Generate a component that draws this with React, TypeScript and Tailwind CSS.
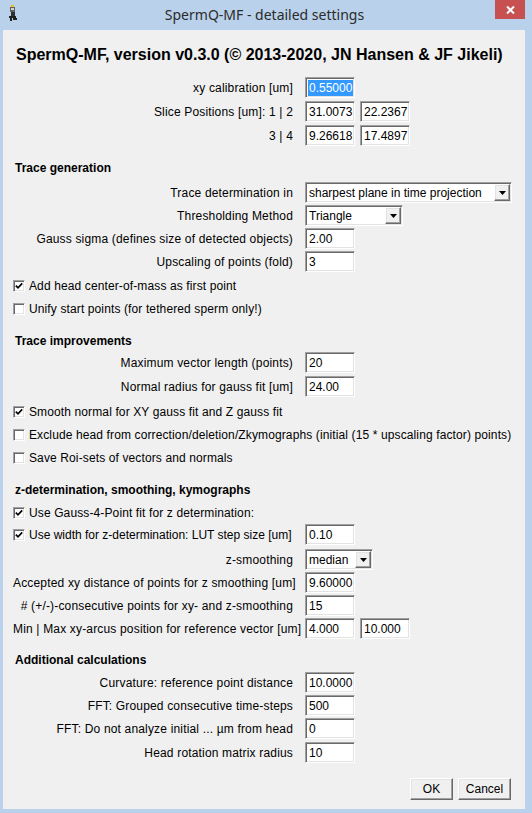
import type React from 'react'

const sunken = 'border border-t-[#a0a0a0] border-l-[#a0a0a0] border-r-white border-b-white shadow-[inset_1px_1px_0_#696969,inset_-1px_-1px_0_#e3e3e3]'
const raised = 'border border-t-white border-l-white border-r-[#696969] border-b-[#696969] shadow-[inset_-1px_-1px_0_#a0a0a0,inset_1px_1px_0_#e3e3e3]'

const Field = ({ value, w = 'w-[50px]', selected }: { value: string; w?: string; selected?: boolean }) => (
    <div className={`${w} h-[21px] bg-white ${sunken} flex items-center overflow-hidden whitespace-nowrap pl-[2px] text-[12px] text-black`}>
        {selected ? <span className="bg-[#3399ff] px-[1px] leading-[16px] text-white">{value}</span> : <span className="pl-[1px]">{value}</span>}
    </div>
)

const Select = ({ value, w }: { value: string; w: string }) => (
    <div className={`${w} h-[21px] bg-white ${sunken} flex items-center pl-[3px] pr-[1px] text-[12px] text-black`}>
        <span className="flex-1 whitespace-nowrap">{value}</span>
        <div className={`flex h-[17px] w-[16px] items-center justify-center bg-[#f0f0f0] ${raised}`}>
            <svg width="7" height="4" viewBox="0 0 7 4">
                <path d="M0 0 H7 L3.5 4 Z" fill="#000" />
            </svg>
        </div>
    </div>
)

const Check = ({ checked }: { checked?: boolean }) => (
    <div className={`flex h-[12px] w-[12px] shrink-0 items-center justify-center bg-white ${sunken}`}>
        {checked && (
            <svg width="8" height="8" viewBox="0 0 8 8">
                <path d="M0.8 3.6 L3 5.8 L7.2 1.4" fill="none" stroke="#000" strokeWidth="1.7" />
            </svg>
        )}
    </div>
)

const Row = ({ label, mt, children }: { label: React.ReactNode; mt: string; children: React.ReactNode }) => (
    <div className={`flex items-center ${mt}`}>
        <div className="w-[280px] whitespace-nowrap text-right tracking-[0.17px]">{label}</div>
        <div className="ml-[12px] flex gap-[5px]">{children}</div>
    </div>
)

const CheckRow = ({ label, checked, mt }: { label: string; checked?: boolean; mt: string }) => (
    <div className={`flex h-[14px] items-center gap-[4px] ${mt}`}>
        <Check checked={checked} />
        <span className="whitespace-nowrap leading-[14px] tracking-[0.12px]">{label}</span>
    </div>
)

const Section = ({ title, mt }: { title: string; mt: string }) => (
    <div className={`pl-[2px] text-[12px] leading-[14px] font-bold ${mt}`}>{title}</div>
)

const Button = ({ label, w }: { label: string; w: string }) => (
    <div className={`${w} flex h-[22px] items-center justify-center bg-[#f0f0f0] text-[12px] ${raised}`}>{label}</div>
)

export default function App() {
    return (
        <div className="flex h-[813px] w-[532px] flex-col bg-[#b9d1ea] font-['Liberation_Sans',Arial,sans-serif] text-black">
            <div className="grid h-[30px] shrink-0 grid-cols-[1fr_auto_1fr]">
                <div className="flex items-start pt-[5px] pl-[8px]">
                    <svg width="10" height="17" viewBox="0 0 10 17">
                        <rect x="3" y="0" width="3" height="2" fill="#e8c020" />
                        <rect x="2" y="2" width="5" height="5" fill="#606060" />
                        <rect x="3" y="3" width="3" height="2" fill="#d0d0d0" />
                        <rect x="3" y="7" width="4" height="4" fill="#303030" />
                        <rect x="1" y="11" width="7" height="2" fill="#202020" />
                        <rect x="2" y="13" width="2" height="3" fill="#202020" />
                        <rect x="5" y="13" width="4" height="2" fill="#202020" />
                    </svg>
                </div>
                <div className="pt-[4px] pr-[3px] font-['Noto_Sans',sans-serif] text-[14px] leading-[21px] text-[#2b2b2b]">SpermQ-MF - detailed settings</div>
                <div className="flex justify-end pr-[7px]">
                    <div className="flex h-[19px] w-[30px] items-center justify-center bg-[#c75050]">
                        <svg width="9" height="8" viewBox="0 0 9 8">
                            <path d="M1 0.5 L8 7.5 M8 0.5 L1 7.5" stroke="#fff" strokeWidth="2" />
                        </svg>
                    </div>
                </div>
            </div>

            <div className="mr-[7px] mb-[4px] ml-[3px] flex-1 bg-[#f0f0f0] pl-[10px] text-[12px]">
                <div className="mt-[15px] pl-[3px] text-[16px] leading-[19px] font-bold">SpermQ-MF, version v0.3.0 (© 2013-2020, JN Hansen &amp; JF Jikeli)</div>

                <Row label="xy calibration [um]" mt="mt-[13px]">
                    <Field value="0.55000" selected />
                </Row>
                <Row label="Slice Positions [um]: 1 | 2" mt="mt-[3px]">
                    <Field value="31.0073" />
                    <Field value="22.2367" />
                </Row>
                <Row label="3 | 4" mt="mt-[3px]">
                    <Field value="9.26618" />
                    <Field value="17.4897" />
                </Row>

                <Section title="Trace generation" mt="mt-[15px]" />
                <Row label="Trace determination in" mt="mt-[7px]">
                    <Select value="sharpest plane in time projection" w="w-[207px]" />
                </Row>
                <Row label="Thresholding Method" mt="mt-[2px]">
                    <Select value="Triangle" w="w-[98px]" />
                </Row>
                <Row label="Gauss sigma (defines size of detected objects)" mt="mt-[2px]">
                    <Field value="2.00" />
                </Row>
                <Row label="Upscaling of points (fold)" mt="mt-[2px]">
                    <Field value="3" />
                </Row>
                <CheckRow label="Add head center-of-mass as first point" checked mt="mt-[7px]" />
                <CheckRow label="Unify start points (for tethered sperm only!)" mt="mt-[9px]" />

                <Section title="Trace improvements" mt="mt-[18px]" />
                <Row label="Maximum vector length (points)" mt="mt-[4px]">
                    <Field value="20" />
                </Row>
                <Row label="Normal radius for gauss fit [um]" mt="mt-[3px]">
                    <Field value="24.00" />
                </Row>
                <CheckRow label="Smooth normal for XY gauss fit and Z gauss fit" checked mt="mt-[8px]" />
                <CheckRow label="Exclude head from correction/deletion/Zkymographs (initial (15 * upscaling factor) points)" mt="mt-[9px]" />
                <CheckRow label="Save Roi-sets of vectors and normals" mt="mt-[9px]" />

                <Section title="z-determination, smoothing, kymographs" mt="mt-[18px]" />
                <CheckRow label="Use Gauss-4-Point fit for z determination:" checked mt="mt-[9px]" />
                <div className="mt-[4px] flex items-center">
                    <div className="flex w-[280px] items-center gap-[4px] whitespace-nowrap">
                        <Check checked />
                        <span>Use width for z-determination: LUT step size [um]</span>
                    </div>
                    <div className="ml-[12px]">
                        <Field value="0.10" />
                    </div>
                </div>
                <Row label="z-smoothing" mt="mt-[4px]">
                    <Select value="median" w="w-[68px]" />
                </Row>
                <Row label="Accepted xy distance of points for z smoothing [um]" mt="mt-[2px]">
                    <Field value="9.60000" />
                </Row>
                <Row label="# (+/-)-consecutive points for xy- and z-smoothing" mt="mt-[2px]">
                    <Field value="15" />
                </Row>
                <Row label="Min | Max xy-arcus position for reference vector [um]" mt="mt-[2px]">
                    <Field value="4.000" />
                    <Field value="10.000" />
                </Row>

                <Section title="Additional calculations" mt="mt-[14px]" />
                <Row label="Curvature: reference point distance" mt="mt-[5px]">
                    <Field value="10.0000" />
                </Row>
                <Row label="FFT: Grouped consecutive time-steps" mt="mt-[2px]">
                    <Field value="500" />
                </Row>
                <Row label="FFT: Do not analyze initial ... µm from head" mt="mt-[2px]">
                    <Field value="0" />
                </Row>
                <Row label="Head rotation matrix radius" mt="mt-[3px]">
                    <Field value="10" />
                </Row>

                <div className="mt-[15px] mr-[14px] flex justify-end gap-[5px]">
                    <Button label="OK" w="w-[43px]" />
                    <Button label="Cancel" w="w-[53px]" />
                </div>
            </div>
        </div>
    )
}
